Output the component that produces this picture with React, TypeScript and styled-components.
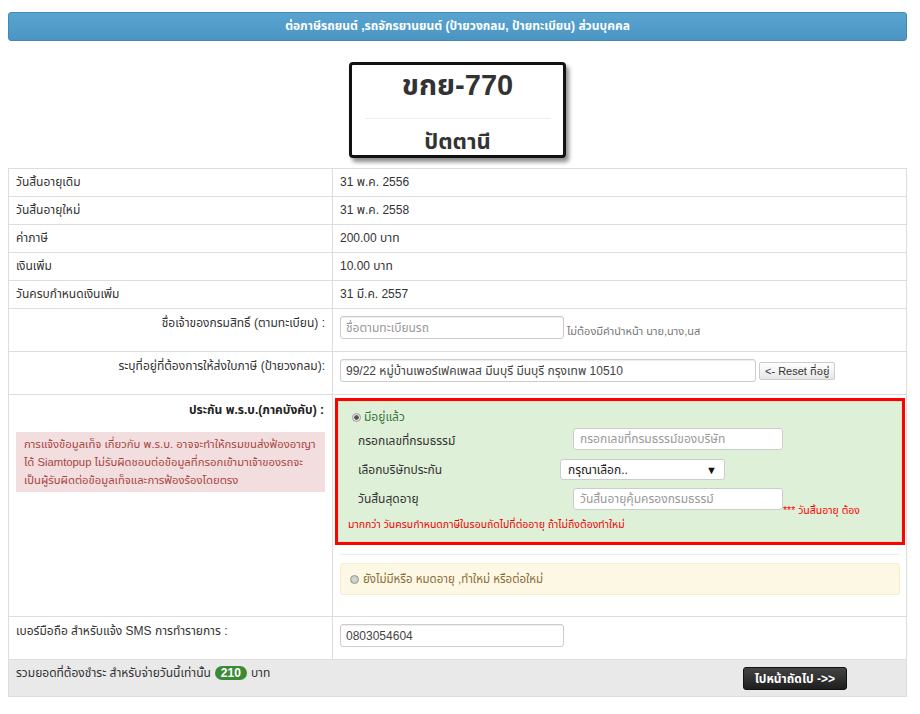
import { createGlobalStyle, styled } from "styled-components";

const GlobalStyle = createGlobalStyle`
  html, body {
    margin: 0;
    padding: 0;
    background: #fff;
  }
  body {
    font-family: Tahoma, "Liberation Sans", "Noto Sans Thai", "DejaVu Sans", sans-serif;
    font-size: 12px;
    color: #333;
  }
  * { box-sizing: border-box; }
`;

const rows = [
  { label: "วันสิ้นอายุเดิม", value: "31 พ.ค. 2556" },
  { label: "วันสิ้นอายุใหม่", value: "31 พ.ค. 2558" },
  { label: "ค่าภาษี", value: "200.00 บาท" },
  { label: "เงินเพิ่ม", value: "10.00 บาท" },
  { label: "วันครบกำหนดเงินเพิ่ม", value: "31 มี.ค. 2557" },
];

const alertLines = [
  "การแจ้งข้อมูลเท็จ เกี่ยวกับ พ.ร.บ. อาจจะทำให้กรมขนส่งฟ้องอาญา",
  "ได้ Siamtopup ไม่รับผิดชอบต่อข้อมูลที่กรอกเข้ามาเจ้าของรถจะ",
  "เป็นผู้รับผิดต่อข้อมูลเท็จและการฟ้องร้องโดยตรง",
];

export default function App() {
  return (
    <>
      <GlobalStyle />
      <Page>
        <HeaderBar>ต่อภาษีรถยนต์ ,รถจักรยานยนต์ (ป้ายวงกลม, ป้ายทะเบียน) ส่วนบุคคล</HeaderBar>

        <PlateWrap>
          <Plate>
            <PlateNumber>ขกย-770</PlateNumber>
            <PlateLine />
            <PlateProvince>ปัตตานี</PlateProvince>
          </Plate>
        </PlateWrap>

        <Table>
          <colgroup>
            <LabelCol />
            <col />
          </colgroup>
          <tbody>
            {rows.map((r) => (
              <Row key={r.label}>
                <LabelCell>{r.label}</LabelCell>
                <ValueCell>{r.value}</ValueCell>
              </Row>
            ))}
            <FormRow>
              <LabelCell $right>ชื่อเจ้าของกรมสิทธิ์ (ตามทะเบียน) :</LabelCell>
              <ValueCell>
                <InlineGroup>
                  <TextInput $w={224} placeholder="ชื่อตามทะเบียนรถ" />
                  <Hint>ไม่ต้องมีคำนำหน้า นาย,นาง,นส</Hint>
                </InlineGroup>
              </ValueCell>
            </FormRow>
            <FormRow>
              <LabelCell $right>ระบุที่อยู่ที่ต้องการให้ส่งใบภาษี (ป้ายวงกลม):</LabelCell>
              <ValueCell>
                <InlineGroup>
                  <TextInput $w={416} defaultValue="99/22 หมู่บ้านเพอร์เฟคเพลส มีนบุรี มีนบุรี กรุงเทพ 10510" />
                  <SmallButton>&lt;- Reset ที่อยู่</SmallButton>
                </InlineGroup>
              </ValueCell>
            </FormRow>
            <FormRow>
              <LabelCell $right>
                <SectionTitle>ประกัน พ.ร.บ.(ภาคบังคับ) :</SectionTitle>
                <DangerAlert>
                  {alertLines.map((l) => (
                    <AlertLine key={l}>{l}</AlertLine>
                  ))}
                </DangerAlert>
              </LabelCell>
              <InsuranceCell>
                <Highlight>
                  <GreenPanel>
                    <RadioLine>
                      <Radio $checked />
                      <span>มีอยู่แล้ว</span>
                    </RadioLine>
                    <FieldGrid>
                      <FieldLabel>กรอกเลขที่กรมธรรม์</FieldLabel>
                      <FieldSlot $offset={13} $top={1}>
                        <GreenInput placeholder="กรอกเลขที่กรมธรรม์ของบริษัท" />
                      </FieldSlot>
                      <FieldLabel>เลือกบริษัทประกัน</FieldLabel>
                      <FieldSlot $offset={0} $top={3}>
                        <SelectBox>
                          <span>กรุณาเลือก..</span>
                          <Caret>▼</Caret>
                        </SelectBox>
                      </FieldSlot>
                      <FieldLabel>วันสิ้นสุดอายุ</FieldLabel>
                      <FieldSlot $offset={13} $top={3}>
                        <GreenInput placeholder="วันสิ้นอายุคุ้มครองกรมธรรม์" />
                        <RedNote>*** วันสิ้นอายุ ต้อง</RedNote>
                      </FieldSlot>
                    </FieldGrid>
                    <RedSmall>มากกว่า วันครบกำหนดภาษีในรอบถัดไปที่ต่ออายุ ถ้าไม่ถึงต้องทำใหม่</RedSmall>
                  </GreenPanel>
                </Highlight>
                <Divider />
                <YellowPanel>
                  <Radio />
                  <span>ยังไม่มีหรือ หมดอายุ ,ทำใหม่ หรือต่อใหม่</span>
                </YellowPanel>
              </InsuranceCell>
            </FormRow>
            <FormRow>
              <LabelCell>เบอร์มือถือ สำหรับแจ้ง SMS การทำรายการ :</LabelCell>
              <ValueCell>
                <TextInput $w={224} defaultValue="0803054604" />
              </ValueCell>
            </FormRow>
            <FooterRow>
              <td colSpan={2}>
                <FooterInner>
                  <TotalText>
                    รวมยอดที่ต้องชำระ สำหรับจ่ายวันนี้เท่านั้น <Badge>210</Badge> บาท
                  </TotalText>
                  <NextButton>ไปหน้าถัดไป -&gt;&gt;</NextButton>
                </FooterInner>
              </td>
            </FooterRow>
          </tbody>
        </Table>
      </Page>
    </>
  );
}

const Page = styled.div`
  width: 899px;
  margin: 0 8px;
  padding-top: 12px;
`;

const HeaderBar = styled.div`
  height: 29px;
  line-height: 27px;
  text-align: center;
  color: #fff;
  font-weight: bold;
  font-size: 12px;
  background: linear-gradient(#5aa4d0, #4b95c4);
  border: 1px solid #4089b9;
  border-radius: 3px;
`;

const PlateWrap = styled.div`
  display: flex;
  justify-content: center;
  padding: 21px 0 10px;
`;

const Plate = styled.div`
  width: 217px;
  height: 96px;
  border: 3px solid #111;
  border-radius: 4px;
  background: #fff;
  box-shadow: 3px 4px 4px rgba(0, 0, 0, 0.45);
  display: flex;
  flex-direction: column;
  align-items: center;
  padding-top: 2px;
`;

const PlateNumber = styled.div`
  font-size: 29px;
  font-weight: bold;
  color: #333;
  line-height: 36px;
`;

const PlateLine = styled.div`
  width: 186px;
  height: 1px;
  flex: none;
  background: #eee;
  margin: 15px 0 10px;
`;

const PlateProvince = styled.div`
  font-size: 22px;
  font-weight: bold;
  color: #333;
  line-height: 26px;
`;

const Table = styled.table`
  width: 100%;
  table-layout: fixed;
  border-collapse: collapse;
  border: 1px solid #ddd;
`;

const LabelCol = styled.col`
  width: 324px;
`;

const Row = styled.tr`
  height: 28px;
`;

const FormRow = styled.tr`
  td {
    padding-top: 7px;
    padding-bottom: 12px;
  }
`;

const LabelCell = styled.td<{ $right?: boolean }>`
  border: 1px solid #ddd;
  padding: 0 7px;
  vertical-align: middle;
  line-height: 27px;
  text-align: ${(p) => (p.$right ? "right" : "left")};
  ${FormRow} & {
    vertical-align: top;
    line-height: 15px;
  }
`;

const ValueCell = styled.td`
  border: 1px solid #ddd;
  padding: 0 7px;
  vertical-align: middle;
  line-height: 27px;
  ${FormRow} & {
    vertical-align: top;
    line-height: normal;
  }
`;

const InlineGroup = styled.div`
  display: flex;
  align-items: flex-end;
  gap: 3px;
`;

const TextInput = styled.input<{ $w: number }>`
  display: block;
  width: ${(p) => p.$w}px;
  height: 23px;
  border: 1px solid #ccc;
  border-radius: 3px;
  padding: 0 5px;
  font: inherit;
  font-size: 12px;
  color: #444;
  background: #fff;
  box-shadow: inset 0 1px 1px rgba(0, 0, 0, 0.075);
  &::placeholder {
    color: #999;
  }
`;

const GreenInput = styled.input`
  display: block;
  width: 210px;
  height: 22px;
  border: 1px solid #ccc;
  border-radius: 3px;
  padding: 0 6px;
  font: inherit;
  font-size: 12px;
  background: #fff;
  &::placeholder {
    color: #999;
  }
`;

const Hint = styled.span`
  font-size: 11px;
  color: #777;
  line-height: 16px;
`;

const SmallButton = styled.button`
  height: 18px;
  margin-bottom: 2px;
  padding: 0 5px;
  font: inherit;
  font-size: 11px;
  line-height: 14px;
  color: #333;
  background: linear-gradient(#fff, #e6e6e6);
  border: 1px solid #ccc;
  border-radius: 2px;
`;

const SectionTitle = styled.div`
  font-weight: bold;
  color: #222;
  line-height: 16px;
  padding-right: 1px;
`;

const DangerAlert = styled.div`
  margin-top: 14px;
  background: #f2dede;
  color: #a94442;
  text-align: left;
  padding: 3px 4px 3px 8px;
  font-size: 11.3px;
`;

const AlertLine = styled.div`
  white-space: nowrap;
  line-height: 18px;
`;

const InsuranceCell = styled.td`
  border: 1px solid #ddd;
  vertical-align: top;
  ${FormRow} & {
    padding: 3px 1px 21px 2px;
  }
`;

const Highlight = styled.div`
  border: 3px solid #f00;
`;

const GreenPanel = styled.div`
  background: #dff0d8;
  border: 1px solid #d0e6c4;
  padding: 7px 8px 10px 8px;
  color: #333;
`;

const RadioLine = styled.div`
  display: flex;
  align-items: center;
  gap: 3px;
  height: 16px;
  color: #3c763d;
  padding-left: 5px;
`;

const Radio = styled.span<{ $checked?: boolean }>`
  width: 9px;
  height: 9px;
  border-radius: 50%;
  border: 1px solid #999;
  background: ${(p) =>
    p.$checked
      ? "radial-gradient(circle, #555 0 2px, #e8e8e8 2.5px)"
      : "radial-gradient(circle, #ddd, #bbb)"};
  flex: none;
`;

const FieldGrid = styled.div`
  display: grid;
  grid-template-columns: 202px 1fr;
  grid-auto-rows: 29px;
  margin-top: 2px;
  padding-left: 11px;
`;

const FieldLabel = styled.div`
  padding-top: 6px;
  line-height: 16px;
  color: #333;
`;

const FieldSlot = styled.div<{ $offset: number; $top: number }>`
  display: flex;
  align-items: flex-start;
  padding-left: ${(p) => p.$offset}px;
  padding-top: ${(p) => p.$top}px;
`;

const SelectBox = styled.div`
  width: 165px;
  height: 21px;
  border: 1px solid #ccc;
  border-radius: 3px;
  background: #fff;
  display: flex;
  align-items: center;
  justify-content: space-between;
  padding: 0 7px;
  font-size: 12px;
  color: #222;
`;

const Caret = styled.span`
  font-size: 11px;
  color: #111;
`;

const RedNote = styled.span`
  color: #f00;
  font-size: 10.5px;
  line-height: 14px;
  margin-top: 15px;
  white-space: nowrap;
`;

const RedSmall = styled.div`
  color: #e00;
  font-size: 10.5px;
  line-height: 14px;
  margin-top: 3px;
  padding-left: 1px;
`;

const Divider = styled.div`
  height: 1px;
  background: #eee;
  margin: 9px 5px 8px 5px;
`;

const YellowPanel = styled.div`
  margin: 0 5px;
  height: 32px;
  background: #fcf8e3;
  border: 1px solid #faebcc;
  border-radius: 3px;
  color: #8a6d3b;
  display: flex;
  align-items: center;
  gap: 4px;
  padding-left: 9px;
  font-size: 11.5px;
`;

const FooterRow = styled.tr`
  td {
    background: #e9e9e9;
    border: 1px solid #ddd;
    padding: 0;
  }
`;

const FooterInner = styled.div`
  height: 36px;
  display: flex;
  align-items: flex-start;
  justify-content: space-between;
  padding: 5px 59px 0 7px;
`;

const TotalText = styled.div`
  display: flex;
  align-items: center;
  gap: 4px;
  line-height: 16px;
`;

const Badge = styled.span`
  background: #3b8a36;
  color: #fff;
  font-weight: bold;
  border-radius: 8px;
  padding: 0 6px;
  line-height: 14px;
  font-size: 12px;
`;

const NextButton = styled.button`
  margin-top: 2px;
  height: 23px;
  padding: 0 11px;
  font: inherit;
  font-size: 12px;
  font-weight: bold;
  color: #fff;
  background: linear-gradient(#444, #1e1e1e);
  border: 1px solid #111;
  border-radius: 3px;
`;
